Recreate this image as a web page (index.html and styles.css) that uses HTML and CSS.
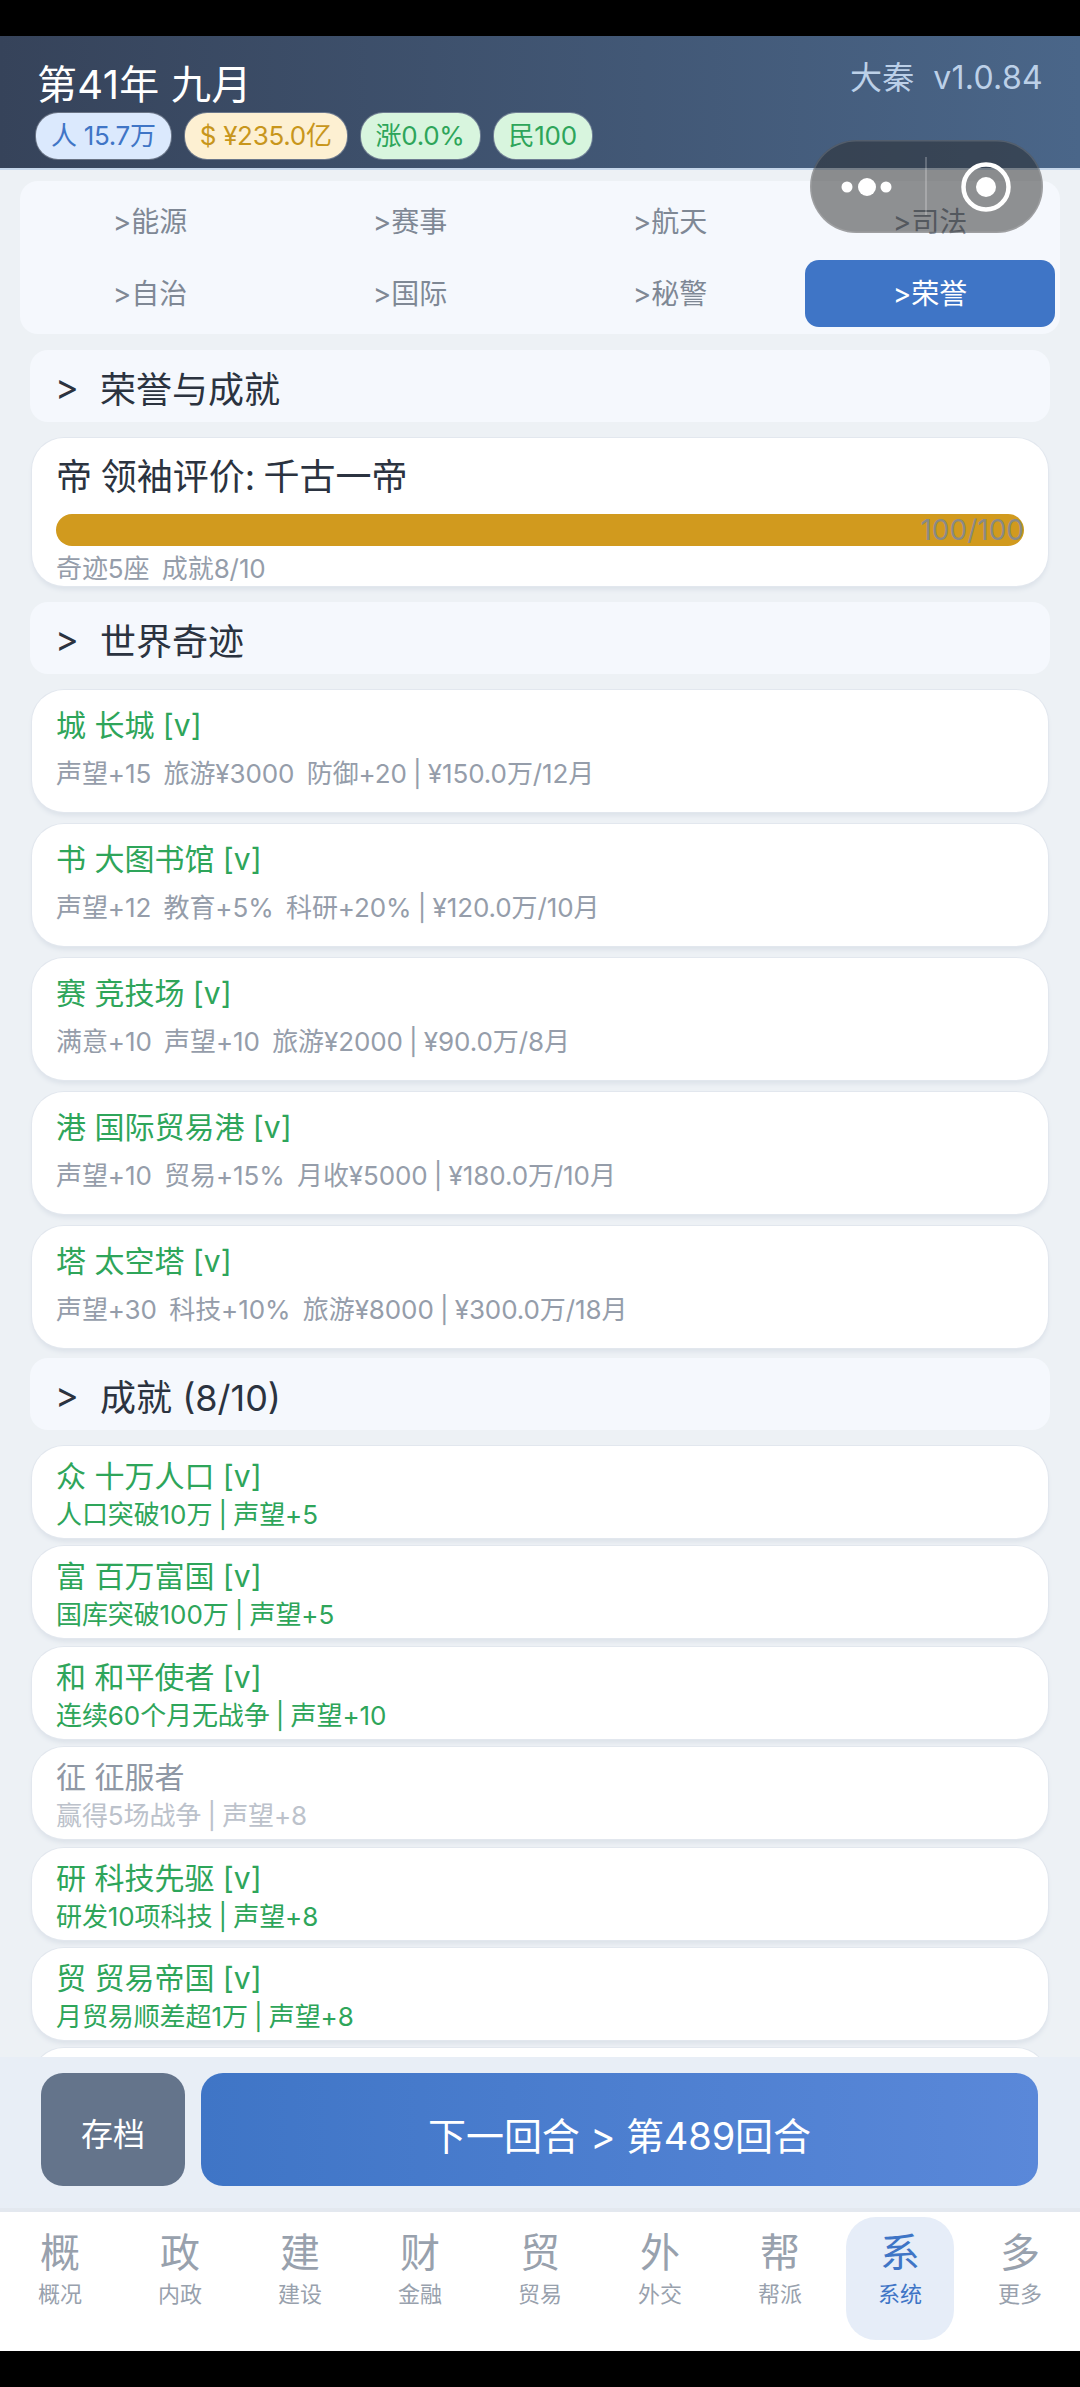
FILE: index.html
```html
<!DOCTYPE html>
<html lang="zh-CN">
<head>
<meta charset="utf-8">
<title>第41年 九月</title>
<link rel="stylesheet" href="styles.css">
</head>
<body>
<div class="bar-black bar-top"></div>
<div class="app">
  <header class="header">
    <div class="head-row">
      <div class="date">第41年 九月</div>
      <div class="version">大秦&nbsp;&nbsp;v1.0.84</div>
    </div>
    <div class="pills">
      <span class="pill pill-blue">人 15.7万</span>
      <span class="pill pill-gold">$ ¥235.0亿</span>
      <span class="pill pill-green">涨0.0%</span>
      <span class="pill pill-green">民100</span>
    </div>
  </header>
  <main class="main">
    <nav class="tabs">
      <div class="tab">&gt;能源</div>
      <div class="tab">&gt;赛事</div>
      <div class="tab">&gt;航天</div>
      <div class="tab">&gt;司法</div>
      <div class="tab">&gt;自治</div>
      <div class="tab">&gt;国际</div>
      <div class="tab">&gt;秘警</div>
      <div class="tab tab-active">&gt;荣誉</div>
    </nav>
    <h2 class="section"><span class="chev">&gt;</span>荣誉与成就</h2>
    <section class="card card-leader">
      <div class="leader-title">帝 领袖评价: 千古一帝</div>
      <div class="progress"><span class="progress-text">100/100</span></div>
      <div class="sub">奇迹5座&nbsp;&nbsp;成就8/10</div>
    </section>
    <h2 class="section"><span class="chev">&gt;</span>世界奇迹</h2>
    <div class="list list-big">
      <div class="card card-big"><div class="name done">城 长城 [v]</div><div class="sub">声望+15&nbsp;&nbsp;旅游¥3000&nbsp;&nbsp;防御+20 | ¥150.0万/12月</div></div>
      <div class="card card-big"><div class="name done">书 大图书馆 [v]</div><div class="sub">声望+12&nbsp;&nbsp;教育+5%&nbsp;&nbsp;科研+20% | ¥120.0万/10月</div></div>
      <div class="card card-big"><div class="name done">赛 竞技场 [v]</div><div class="sub">满意+10&nbsp;&nbsp;声望+10&nbsp;&nbsp;旅游¥2000 | ¥90.0万/8月</div></div>
      <div class="card card-big"><div class="name done">港 国际贸易港 [v]</div><div class="sub">声望+10&nbsp;&nbsp;贸易+15%&nbsp;&nbsp;月收¥5000 | ¥180.0万/10月</div></div>
      <div class="card card-big"><div class="name done">塔 太空塔 [v]</div><div class="sub">声望+30&nbsp;&nbsp;科技+10%&nbsp;&nbsp;旅游¥8000 | ¥300.0万/18月</div></div>
    </div>
    <h2 class="section section-tight"><span class="chev">&gt;</span>成就 (8/10)</h2>
    <div class="list list-small">
      <div class="card card-small"><div class="name done">众 十万人口 [v]</div><div class="sub done">人口突破10万 | 声望+5</div></div>
      <div class="card card-small"><div class="name done">富 百万富国 [v]</div><div class="sub done">国库突破100万 | 声望+5</div></div>
      <div class="card card-small"><div class="name done">和 和平使者 [v]</div><div class="sub done">连续60个月无战争 | 声望+10</div></div>
      <div class="card card-small"><div class="name locked">征 征服者</div><div class="sub faint">赢得5场战争 | 声望+8</div></div>
      <div class="card card-small"><div class="name done">研 科技先驱 [v]</div><div class="sub done">研发10项科技 | 声望+8</div></div>
      <div class="card card-small"><div class="name done">贸 贸易帝国 [v]</div><div class="sub done">月贸易顺差超1万 | 声望+8</div></div>
      <div class="card card-small"></div>
    </div>
  </main>
  <div class="actions">
    <button class="btn btn-save">存档</button>
    <button class="btn btn-next">下一回合 &gt; 第489回合</button>
  </div>
  <footer class="nav">
    <div class="nav-item"><span class="nav-icon">概</span><span class="nav-label">概况</span></div>
    <div class="nav-item"><span class="nav-icon">政</span><span class="nav-label">内政</span></div>
    <div class="nav-item"><span class="nav-icon">建</span><span class="nav-label">建设</span></div>
    <div class="nav-item"><span class="nav-icon">财</span><span class="nav-label">金融</span></div>
    <div class="nav-item"><span class="nav-icon">贸</span><span class="nav-label">贸易</span></div>
    <div class="nav-item"><span class="nav-icon">外</span><span class="nav-label">外交</span></div>
    <div class="nav-item"><span class="nav-icon">帮</span><span class="nav-label">帮派</span></div>
    <div class="nav-item nav-active"><span class="nav-icon">系</span><span class="nav-label">系统</span></div>
    <div class="nav-item"><span class="nav-icon">多</span><span class="nav-label">更多</span></div>
  </footer>
</div>
<div class="bar-black"></div>
<div class="capsule">
  <svg class="capsule-svg" width="233" height="93" viewBox="0 0 233 93" aria-hidden="true">
    <circle cx="37" cy="47" r="5.5" fill="#fff"/>
    <circle cx="57" cy="47" r="9" fill="#fff"/>
    <circle cx="76" cy="47" r="5.5" fill="#fff"/>
    <line x1="116" y1="17" x2="116" y2="75" stroke="rgba(255,255,255,.3)" stroke-width="1.5"/>
    <circle cx="176" cy="47" r="22.5" fill="none" stroke="#fff" stroke-width="4.5"/>
    <circle cx="176" cy="47" r="10" fill="#fff"/>
  </svg>
</div>
</body>
</html>
```
FILE: styles.css
```css
* { box-sizing: border-box; }
html, body { margin: 0; padding: 0; }
body {
  width: 1080px;
  height: 2387px;
  overflow: hidden;
  position: relative;
  display: flex;
  flex-direction: column;
  background: #000;
  font-family: "Inter", "Noto Sans CJK SC", sans-serif;
  color: #2b3340;
}
.bar-black { height: 36px; background: #000; flex: none; }
.app {
  height: 2315px;
  flex: none;
  display: flex;
  flex-direction: column;
  background: #edf1f5;
}
.header {
  height: 134px;
  flex: none;
  padding: 21px 36px 0 36px;
  background: linear-gradient(90deg, #36435a 0%, #4a6689 100%);
  border-bottom: 2px solid #c5d6ea;
}
.head-row { display: flex; justify-content: space-between; height: 56px; }
.date { font-size: 40px; line-height: 52px; color: #fff; padding: 2px 0 0 1px; letter-spacing: .3px; }
.version { font-size: 32px; line-height: 42px; color: #bcd0e8; margin-right: 1px; letter-spacing: .3px; }
.pills { display: flex; gap: 14px; }
.pill {
  height: 46px;
  line-height: 46px;
  padding: 0 15px;
  border-radius: 22px;
  font-size: 26px;
  letter-spacing: -.3px;
  box-shadow: 0 0 0 1px rgba(255,255,255,.25);
}
.pill-blue { background: #dbe9fd; color: #3f75c6; }
.pill-gold { background: #fdf0d2; color: #c8961c; }
.pill-green { background: #d8f5de; color: #2ea55a; }

.main { height: 1887px; flex: none; overflow: hidden; padding: 11px 0 0; }
.tabs {
  margin: 0 20px;
  padding: 7px 5px;
  height: 153px;
  background: #f5f8fd;
  border-radius: 18px;
  display: grid;
  grid-template-columns: repeat(4, 250px);
  grid-auto-rows: 67px;
  column-gap: 10px;
  row-gap: 5px;
}
.tab {
  display: flex;
  align-items: center;
  justify-content: center;
  font-size: 28px;
  color: #7f8895;
  border-radius: 14px;
  padding-bottom: 3px;
}
.tab-active { background: #3f75c6; color: #fff; }

.section {
  margin: 16px 30px;
  height: 72px;
  padding: 2px 25px 0;
  display: flex;
  align-items: center;
  background: #f5f8fd;
  border-radius: 18px;
  font-size: 36px;
  font-weight: 400;
  color: #2b3340;
}
.section-tight { margin-top: 10px; }
.chev { width: 45px; flex: none; }

.card {
  margin: 0 32px;
  background: #fff;
  border-radius: 32px;
  box-shadow: 0 0 0 1px #e2e7ee, 0 4px 4px #dde3ea;
  padding: 0 24px;
}
.card-leader { height: 148px; padding-top: 16px; }
.leader-title { font-size: 36px; line-height: 46px; color: #2b3340; word-spacing: -1.5px; }
.progress {
  margin-top: 14px;
  height: 32px;
  border-radius: 16px;
  background: #d19a1e;
  display: flex;
  justify-content: flex-end;
  align-items: center;
}
.progress-text { font-size: 28px; line-height: 32px; color: #8a8a86; }
.card-leader .sub { margin-top: 5px; }
.sub { font-size: 26px; line-height: 36px; color: #959daa; letter-spacing: -.1px; word-spacing: -1px; }
.name { font-size: 30px; line-height: 40px; }
.done { color: #2ea55a; }
.locked { color: #8f98a5; }
.faint { color: #bcc2cb; }
.list { display: flex; flex-direction: column; }
.list-big { gap: 12px; }
.list-small { gap: 8.4px; }
.card-big { height: 122px; padding-top: 15px; }
.card-big .sub { margin-top: 11px; }
.card-small { height: 92px; flex: none; padding-top: 10px; }
.card-small .sub { margin-top: 2px; line-height: 34px; }

.actions {
  height: 151px;
  flex: none;
  padding: 16px 42px 22px 41px;
  display: flex;
  gap: 16px;
  background: #e8eef6;
}
.btn {
  border: 0;
  height: 113px;
  border-radius: 22px;
  color: #fff;
  font-family: inherit;
  padding: 4px 0 0;
}
.btn-save { width: 144px; background: #64748b; font-size: 32px; flex: none; }
.btn-next { flex: 1; background: linear-gradient(90deg, #3f75c6, #5a88d9); font-size: 38px; padding-top: 8px; letter-spacing: -.1px; }

.nav {
  height: 143px;
  flex: none;
  display: grid;
  grid-template-columns: repeat(9, 120px);
  background: #fff;
  border-top: 4px solid #e3e8ef;
  padding-top: 5px;
}
.nav-item {
  height: 123px;
  display: flex;
  flex-direction: column;
  align-items: center;
  padding-top: 10px;
  color: #98a1ad;
}
.nav-icon { font-size: 40px; line-height: 52px; }
.nav-label { font-size: 22px; line-height: 32px; margin-top: -1px; }
.nav-active {
  margin: 0 6px;
  background: #e6edf8;
  border-radius: 30px;
  color: #3f75c6;
}

.capsule {
  position: absolute;
  left: 810px;
  top: 140px;
  width: 233px;
  height: 93px;
  border-radius: 47px;
  background: rgba(40, 40, 40, .5);
  box-shadow: inset 0 0 0 1.5px rgba(255,255,255,.14);
}
.capsule-svg { display: block; }
```
